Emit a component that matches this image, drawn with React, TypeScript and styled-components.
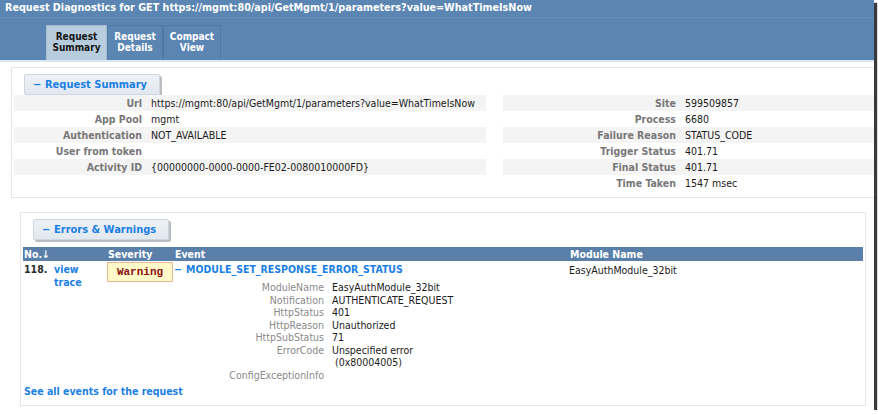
import React from "react";
import styled, { createGlobalStyle } from "styled-components";

const FONT = `"DejaVu Sans Condensed", "DejaVu Sans", Verdana, sans-serif`;
const BLUE_LINK = "#1b7fe3";
const HEADER_BLUE = "#5b86b3";

const Global = createGlobalStyle`
  html, body { margin: 0; padding: 0; background: #ffffff; }
  body { font-family: ${FONT}; font-size: 10.5px; color: #1a1a1a; }
`;

const Window = styled.div`
  width: 874px;
  height: 410px;
  background: #ffffff;
  box-shadow: 3px 3px 1px #3a3a3a;
  overflow: hidden;
  display: flex;
  flex-direction: column;
`;

const Header = styled.header`
  background: ${HEADER_BLUE};
  height: 60px;
  display: flex;
  flex-direction: column;
  border-bottom: 2px solid #dce6ef;
`;

const TitleBar = styled.div`
  height: 17px;
  line-height: 16px;
  padding-left: 5px;
  color: #ffffff;
  font-weight: bold;
  font-size: 10.7px;
  border-bottom: 1px solid #6690bb;
  white-space: nowrap;
`;

const TabRow = styled.nav`
  display: flex;
  align-items: flex-end;
  padding-left: 46px;
  margin-top: auto;
`;

const Tab = styled.div<{ $active?: boolean; $w: number }>`
  width: ${(p) => p.$w}px;
  height: ${(p) => (p.$active ? 35 : 33)}px;
  box-sizing: border-box;
  margin-bottom: ${(p) => (p.$active ? 0 : 2)}px;
  padding-top: 5px;
  text-align: center;
  font-weight: bold;
  font-size: 10px;
  line-height: 11px;
  color: ${(p) => (p.$active ? "#151515" : "#ffffff")};
  background: ${(p) => (p.$active ? "#b7ccdc" : "transparent")};
  border: 1px solid ${(p) => (p.$active ? "#a5bccf" : "#4e79a5")};
  border-bottom: none;
`;

const Content = styled.main`
  flex: 1;
  display: flex;
  flex-direction: column;
  padding-top: 5px;
`;

const Panel = styled.section<{ $ml: number; $w: number; $h: number; $mt: number }>`
  margin-left: ${(p) => p.$ml}px;
  margin-top: ${(p) => p.$mt}px;
  width: ${(p) => p.$w}px;
  height: ${(p) => p.$h}px;
  box-sizing: border-box;
  border: 1px solid #e6e6e6;
  display: flex;
  flex-direction: column;
`;

const SectionButton = styled.div<{ $w: number }>`
  margin: 6px 0 0 12px;
  width: ${(p) => p.$w}px;
  height: 21px;
  box-sizing: border-box;
  background: linear-gradient(#eef2f6, #e1e8ef);
  border: 1px solid #cfd7df;
  border-radius: 2px;
  box-shadow: 2px 2px 0 #b9bcc0;
  color: ${BLUE_LINK};
  font-weight: bold;
  font-size: 11px;
  line-height: 19px;
  padding-left: 8px;
  white-space: nowrap;
`;

const Dash = styled.span`
  display: inline-block;
  width: 12px;
`;

const SummaryGrid = styled.div`
  display: flex;
  gap: 17px;
  padding-left: 2px;
`;

const InfoTable = styled.div<{ $w: number; $label: number }>`
  width: ${(p) => p.$w}px;
  display: grid;
  grid-template-columns: ${(p) => p.$label}px 1fr;
  grid-auto-rows: 16px;
`;

const InfoRow = styled.div<{ $shade?: boolean }>`
  display: contents;
  & > * {
    background: ${(p) => (p.$shade ? "#f4f4f4" : "transparent")};
  }
`;

const InfoLabel = styled.div`
  text-align: right;
  color: #777777;
  font-weight: bold;
  line-height: 16px;
  padding-right: 9px;
  white-space: nowrap;
`;

const InfoValue = styled.div`
  line-height: 16px;
  white-space: nowrap;
  color: #1a1a1a;
`;

const EventTable = styled.div`
  margin: 7px 0 0 2px;
  width: 840px;
  display: grid;
  grid-template-columns: 30px 54px 67px 395px 1fr;
`;

const HeadCell = styled.div<{ $span?: number }>`
  grid-column: span ${(p) => p.$span ?? 1};
  background: #5a80aa;
  color: #ffffff;
  font-weight: bold;
  font-size: 10.5px;
  height: 14px;
  line-height: 14px;
  padding-left: 1px;
  white-space: nowrap;
`;

const NumCell = styled.div`
  padding-left: 1px;
  padding-top: 2px;
  line-height: 12px;
  font-weight: bold;
  color: #2a2a2a;
  white-space: nowrap;
`;

const LinkCell = styled.div`
  color: ${BLUE_LINK};
  font-weight: bold;
  line-height: 12.5px;
  padding: 2px 0 0 1px;
`;

const PlainCell = styled.div`
  padding-top: 3px;
  line-height: 12px;
  white-space: nowrap;
`;

const Badge = styled.div`
  margin-top: 1px;
  width: 66px;
  height: 20px;
  box-sizing: border-box;
  background: #fff9c9;
  border: 1px solid #e8b896;
  color: #8a1010;
  font-family: "Liberation Mono", "DejaVu Sans Mono", monospace;
  font-weight: bold;
  font-size: 11px;
  line-height: 18px;
  text-align: center;
`;

const EventCell = styled.div`
  display: flex;
  flex-direction: column;
`;

const EventTitle = styled.div`
  color: ${BLUE_LINK};
  font-weight: bold;
  line-height: 12px;
  padding-top: 2px;
  white-space: nowrap;
`;

const Details = styled.div`
  margin-top: 6px;
  display: grid;
  grid-template-columns: 150px 1fr;
  column-gap: 8px;
  grid-auto-rows: minmax(12.5px, auto);
`;

const DetailLabel = styled.div`
  text-align: right;
  color: #8a8a8a;
  line-height: 12.5px;
  white-space: nowrap;
`;

const DetailValue = styled.div`
  line-height: 12.5px;
  white-space: pre;
`;

const FooterLink = styled.div`
  margin: 4px 0 0 3px;
  color: ${BLUE_LINK};
  font-weight: bold;
  line-height: 13px;
`;

const leftRows = [
  ["Url", "https://mgmt:80/api/GetMgmt/1/parameters?value=WhatTimeIsNow"],
  ["App Pool", "mgmt"],
  ["Authentication", "NOT_AVAILABLE"],
  ["User from token", ""],
  ["Activity ID", "{00000000-0000-0000-FE02-0080010000FD}"],
];

const rightRows = [
  ["Site", "599509857"],
  ["Process", "6680"],
  ["Failure Reason", "STATUS_CODE"],
  ["Trigger Status", "401.71"],
  ["Final Status", "401.71"],
  ["Time Taken", "1547 msec"],
];

const details = [
  ["ModuleName", "EasyAuthModule_32bit"],
  ["Notification", "AUTHENTICATE_REQUEST"],
  ["HttpStatus", "401"],
  ["HttpReason", "Unauthorized"],
  ["HttpSubStatus", "71"],
  ["ErrorCode", "Unspecified error\n (0x80004005)"],
  ["ConfigExceptionInfo", ""],
];

export default function App() {
  return (
    <>
      <Global />
      <Window>
        <Header>
          <TitleBar>
            Request Diagnostics for GET https://mgmt:80/api/GetMgmt/1/parameters?value=WhatTimeIsNow
          </TitleBar>
          <TabRow>
            <Tab $active $w={61}>
              Request
              <br />
              Summary
            </Tab>
            <Tab $w={56}>
              Request
              <br />
              Details
            </Tab>
            <Tab $w={58}>
              Compact
              <br />
              View
            </Tab>
          </TabRow>
        </Header>
        <Content>
          <Panel $ml={11} $mt={0} $w={870} $h={131}>
            <SectionButton $w={136}>
              <Dash>−</Dash>Request Summary
            </SectionButton>
            <SummaryGrid>
              <InfoTable $w={472} $label={137}>
                {leftRows.map(([l, v], i) => (
                  <InfoRow key={l} $shade={i % 2 === 0}>
                    <InfoLabel>{l}</InfoLabel>
                    <InfoValue>{v}</InfoValue>
                  </InfoRow>
                ))}
              </InfoTable>
              <InfoTable $w={372} $label={182}>
                {rightRows.map(([l, v], i) => (
                  <InfoRow key={l} $shade={i % 2 === 0}>
                    <InfoLabel>{l}</InfoLabel>
                    <InfoValue>{v}</InfoValue>
                  </InfoRow>
                ))}
              </InfoTable>
            </SummaryGrid>
          </Panel>
          <Panel $ml={20} $mt={14} $w={846} $h={194}>
            <SectionButton $w={136}>
              <Dash>−</Dash>Errors &amp; Warnings
            </SectionButton>
            <EventTable>
              <HeadCell $span={2}>No.↓</HeadCell>
              <HeadCell>Severity</HeadCell>
              <HeadCell>Event</HeadCell>
              <HeadCell>Module Name</HeadCell>
              <NumCell>118.</NumCell>
              <LinkCell>
                view
                <br />
                trace
              </LinkCell>
              <div>
                <Badge>Warning</Badge>
              </div>
              <EventCell>
                <EventTitle>
                  <Dash>−</Dash>MODULE_SET_RESPONSE_ERROR_STATUS
                </EventTitle>
                <Details>
                  {details.map(([l, v]) => (
                    <React.Fragment key={l}>
                      <DetailLabel>{l}</DetailLabel>
                      <DetailValue>{v}</DetailValue>
                    </React.Fragment>
                  ))}
                </Details>
              </EventCell>
              <PlainCell>EasyAuthModule_32bit</PlainCell>
            </EventTable>
            <FooterLink>See all events for the request</FooterLink>
          </Panel>
        </Content>
      </Window>
    </>
  );
}
